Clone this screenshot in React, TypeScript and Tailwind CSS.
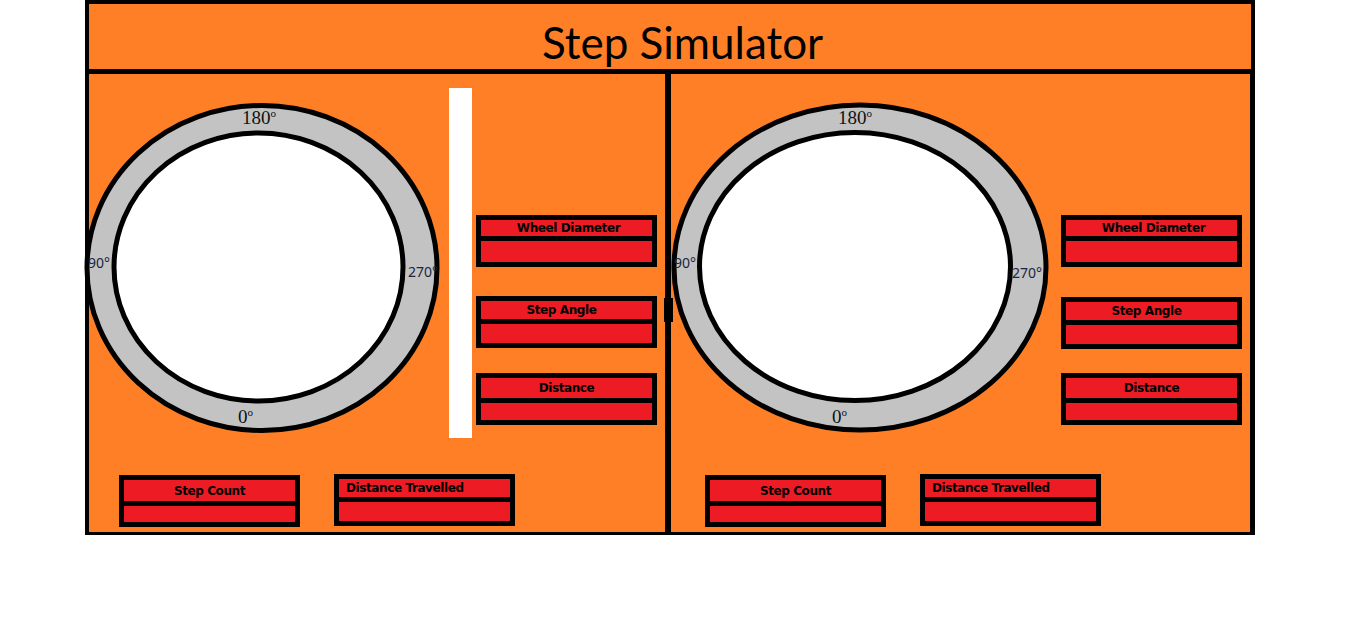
import React from 'react';

interface FieldProps {
  label: string;
  className?: string;
  labelClass?: string;
  topClass?: string;
  bottomClass?: string;
}

// red input box with a label strip on top
const Field: React.FC<FieldProps> = ({
  label,
  className = '',
  labelClass = 'justify-center',
  topClass = 'h-[17px]',
  bottomClass = 'h-[20px]',
}) => {
  return (
    <div className={`flex w-[181px] shrink-0 flex-col border-[5px] border-black bg-black ${className}`}>
      <div
        className={`flex items-center bg-[#ed1c24] font-['DejaVu_Sans',sans-serif] text-[12px] font-bold leading-none tracking-[-0.4px] text-black ${topClass} ${labelClass}`}
      >
        <span>{label}</span>
      </div>
      <div className={`mt-[5px] bg-[#ed1c24] ${bottomClass}`} />
    </div>
  );
};

interface DialProps {
  x: number;
  width: number;
  outer: { cx: number; cy: number; rx: number; ry: number };
  inner: { cx: number; cy: number; rx: number; ry: number };
  top: [number, number];
  bottom: [number, number];
  left: [number, number];
  right: [number, number];
  className?: string;
}

const Dial: React.FC<DialProps> = ({ x, width, outer, inner, top, bottom, left, right, className = '' }) => {
  return (
    <svg
      width={width}
      height={336}
      viewBox={`${x} 100 ${width} 336`}
      className={`shrink-0 overflow-visible ${className}`}
    >
      <ellipse {...outer} fill="#c3c3c3" stroke="#000" strokeWidth={5} />
      <ellipse {...inner} fill="#fff" stroke="#000" strokeWidth={5} />
      <g fontFamily="'Liberation Serif', serif" fontSize={19} fill="#111">
        <text x={top[0]} y={top[1]}>
          180
          <tspan fontSize={11} dy={-7}>o</tspan>
        </text>
        <text x={bottom[0]} y={bottom[1]}>
          0
          <tspan fontSize={11} dy={-7}>o</tspan>
        </text>
      </g>
      <g fontFamily="'Noto Sans', sans-serif" fontSize={14} fill="#1a2540">
        <text x={left[0]} y={left[1]}>90°</text>
        <text x={right[0]} y={right[1]}>270°</text>
      </g>
    </svg>
  );
};

const App: React.FC = () => {
  return (
    <div className="h-[623px] w-[1360px] bg-white">
      <div className="ml-[85px] w-[1170px] bg-[#ff7f27]">
        {/* title bar */}
        <div className="h-[74px] border-t-4 border-r-4 border-b-[5px] border-l-4 border-black pt-[16px] pl-[25px] text-center font-['Lato',sans-serif] text-[44px] leading-[44px] text-black">
          Step Simulator
        </div>

        <div className="flex h-[461px] border-r-[5px] border-b-[3px] border-l-4 border-black">
          {/* left simulator */}
          <div className="flex w-[576px] flex-col pt-[14px]">
            <div className="flex items-start">
              <Dial
                x={84}
                width={360}
                className="-ml-[5px] mt-[12px]"
                outer={{ cx: 262, cy: 268, rx: 175, ry: 162.5 }}
                inner={{ cx: 258.5, cy: 267, rx: 144.5, ry: 134 }}
                top={[242, 124]}
                bottom={[238, 423]}
                left={[88, 268]}
                right={[408, 277]}
              />
              <div className="ml-[5px] h-[350px] w-[23px] bg-white" />
              <div className="mt-[127px] ml-[4px] flex flex-col">
                <Field label="Wheel Diameter" topClass="h-[16px]" bottomClass="h-[21px]" labelClass="justify-center pl-[4px]" />
                <Field label="Step Angle" className="mt-[29px]" topClass="h-[18px]" bottomClass="h-[19px]" labelClass="justify-center pr-[10px]" />
                <Field label="Distance" className="mt-[25px]" topClass="h-[20px]" bottomClass="h-[17px]" />
              </div>
            </div>
            <div className="mt-auto flex items-end gap-[34px] pb-[5px] pl-[30px]">
              <Field label="Step Count" topClass="h-[21px]" bottomClass="h-[16px]" />
              <Field label="Distance Travelled" className="mb-[1px]" topClass="h-[18px]" bottomClass="h-[19px]" labelClass="justify-start pl-[7px]" />
            </div>
          </div>

          {/* divider with the little blob from the sketch */}
          <div className="flex w-[6px] shrink-0 flex-col bg-black">
            <div className="mt-[224px] -ml-[1px] h-[24px] w-[9px] bg-black" />
          </div>

          {/* right simulator */}
          <div className="flex w-[579px] flex-col pt-[14px]">
            <div className="flex items-start">
              <Dial
                x={671}
                width={380}
                className="mt-[12px]"
                outer={{ cx: 860, cy: 267.5, rx: 186, ry: 162.5 }}
                inner={{ cx: 855, cy: 266.5, rx: 155.5, ry: 134 }}
                top={[838, 124]}
                bottom={[832, 423]}
                left={[674, 268]}
                right={[1012, 278]}
              />
              <div className="mt-[127px] ml-[10px] flex flex-col">
                <Field label="Wheel Diameter" topClass="h-[16px]" bottomClass="h-[21px]" labelClass="justify-center pl-[4px]" />
                <Field label="Step Angle" className="mt-[30px]" topClass="h-[18px]" bottomClass="h-[19px]" labelClass="justify-center pr-[10px]" />
                <Field label="Distance" className="mt-[24px]" topClass="h-[20px]" bottomClass="h-[17px]" />
              </div>
            </div>
            <div className="mt-auto flex items-end gap-[34px] pb-[5px] pl-[34px]">
              <Field label="Step Count" topClass="h-[21px]" bottomClass="h-[16px]" />
              <Field label="Distance Travelled" className="mb-[1px]" topClass="h-[18px]" bottomClass="h-[19px]" labelClass="justify-start pl-[7px]" />
            </div>
          </div>
        </div>
      </div>
    </div>
  );
};

export default App;
